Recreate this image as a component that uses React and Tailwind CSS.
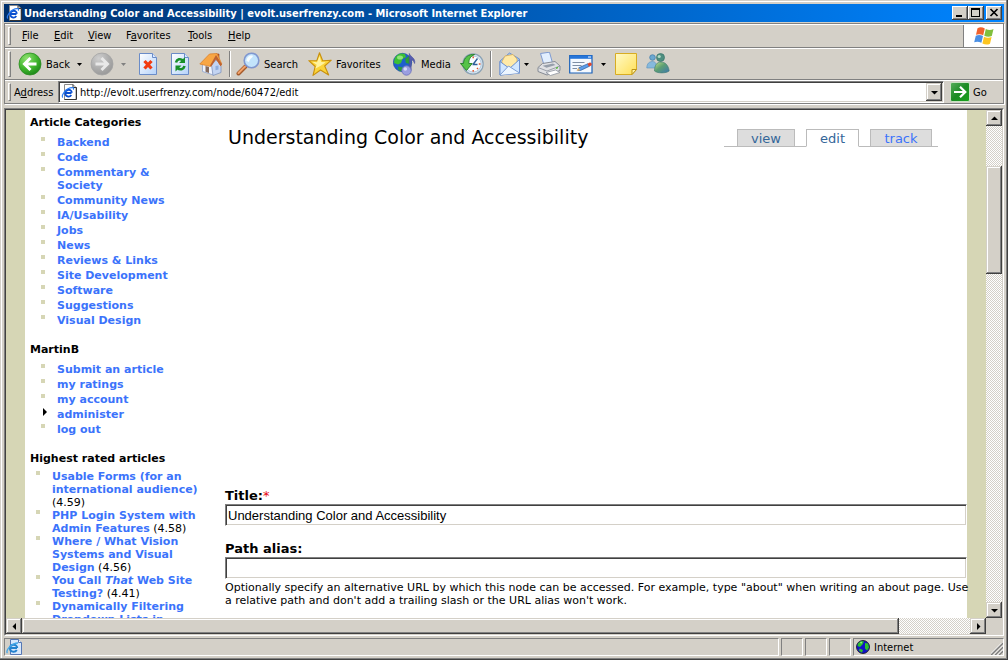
import React from "react";

const raised =
  "bg-[#d4d0c8] shadow-[inset_-1px_-1px_#404040,inset_1px_1px_#d4d0c8,inset_-2px_-2px_#808080,inset_2px_2px_#fff]";
const control =
  "bg-[#d4d0c8] shadow-[inset_-1px_-1px_#404040,inset_1px_1px_#fff,inset_-2px_-2px_#808080]";
const sunken = "border border-t-[#808080] border-l-[#808080] border-r-white border-b-white";
const inset =
  "border border-t-[#808080] border-l-[#808080] border-r-white border-b-white bg-white shadow-[inset_1px_1px_#404040,inset_-1px_-1px_#d4d0c8]";
const track =
  "bg-[repeating-conic-gradient(#ffffff_0_25%,#d4d0c8_0_50%)] bg-[length:2px_2px]";

function PageIcon({ className }) {
  return (
    <svg viewBox="0 0 16 16" className={className} aria-hidden="true">
      <path d="M3.500 .5h8.500l3 3v12H3.500z" fill="#fff" stroke="#8a8a8a" />
      <path d="M12 .5v3h3.500v12h-12" fill="none" stroke="#333" />
      <path d="M10.500 9H4.500M10.300 11c-2 2.800-6 1.500-6-1.800 0-4.300 6.200-4.800 6.500-.4" fill="none" stroke="#0a4fd0" strokeWidth="1.800" />
      <path d="M2 13.500C-.8 12.500 5 3.200 11.500 3.600c1.500.1 1.300 1.200.7 2.100" fill="none" stroke="#2b7cf0" strokeWidth="1.200" />
    </svg>
  );
}

function Arrow({ dir = "down", className = "" }) {
  const d = {
    down: "M1 3h7L4.500 6.500z",
    up: "M1 6h7L4.500 2.500z",
    left: "M6 1v7L2.500 4.500z",
    right: "M3 1v7l3.500-3.500z",
  }[dir];
  return (
    <svg viewBox="0 0 9 9" className={`h-[9px] w-[9px] ${className}`} aria-hidden="true">
      <path d={d} fill="currentColor" />
    </svg>
  );
}

function SmallArrow({ className = "" }) {
  return (
    <svg viewBox="0 0 5 3" className={`h-[3px] w-[5px] shrink-0 ${className}`} aria-hidden="true">
      <path d="M0 0h5L2.500 3z" fill="currentColor" />
    </svg>
  );
}

function NavIcon({ forward }) {
  const id = forward ? "navf" : "navb";
  return (
    <svg viewBox="0 0 24 24" className="h-6 w-6 shrink-0" aria-hidden="true">
      <defs>
        <radialGradient id={id} cx=".35" cy=".25" r=".8">
          <stop offset="0" stopColor={forward ? "#cfcfcf" : "#8fe070"} />
          <stop offset=".6" stopColor={forward ? "#ababab" : "#3fb52c"} />
          <stop offset="1" stopColor={forward ? "#989898" : "#1d861a"} />
        </radialGradient>
      </defs>
      <circle cx="12" cy="12" r="11" fill={`url(#${id})`} stroke={forward ? "#a5a5a5" : "#2c8c22"} strokeWidth=".8" />
      <path
        d={forward ? "M5.500 12H17.500M11.500 6l6 6-6 6" : "M18.500 12H6.500M12.500 6l-6 6 6 6"}
        fill="none"
        stroke={forward ? "#e8e8e8" : "#fff"}
        strokeWidth="3"
      />
    </svg>
  );
}

function SheetIcon({ kind }) {
  return (
    <svg viewBox="0 0 20 24" className="h-6 w-5 shrink-0" aria-hidden="true">
      <defs>
        <linearGradient id={`sheet-${kind}`} x1="0" y1="0" x2="1" y2="1">
          <stop offset="0" stopColor="#fff" />
          <stop offset="1" stopColor="#b4d2fa" />
        </linearGradient>
      </defs>
      <path d="M1.500 1.500h13l4 4V22.500h-17z" fill={`url(#sheet-${kind})`} stroke="#6a8cc8" />
      <path d="M14.500 1.500v4h4" fill="#dbe9ff" stroke="#6a8cc8" />
      {kind === "stop" ? (
        <path d="M6.500 9l7 7.500M13.500 9l-7 7.500" stroke="#f23a10" strokeWidth="3.200" />
      ) : (
        <g fill="none" stroke="#17902a" strokeWidth="2.600">
          <path d="M6 10.500c.8-3.500 4.500-4.200 7-2" />
          <path d="M14.500 14c-.8 3.500-4.500 4.200-7 2" />
          <path d="M15 5v6H9zM5.500 19.500v-6h6z" fill="#17902a" stroke="none" />
        </g>
      )}
    </svg>
  );
}

function HomeIcon() {
  return (
    <svg viewBox="0 0 24 24" className="h-6 w-6 shrink-0" aria-hidden="true">
      <path d="M3.500 12l9-4 2 5v10l-11-3.500z" fill="#eef3fd" stroke="#8da2cc" strokeWidth=".8" />
      <path d="M12.500 13l5-5.500 4.500 6.500v6.500l-8 3z" fill="#c3d4f2" stroke="#7f93bd" strokeWidth=".8" />
      <path d="M17 2h3v6h-3z" fill="#c7592b" stroke="#94401d" strokeWidth=".6" />
      <path d="M.8 12L10.500 2l7.500-.5L22.800 12l-1.300 1.500L17 6.500l-5.500 8z" fill="#f8a644" stroke="#d9822e" strokeWidth=".8" />
      <path d="M17 3l6 9.500-1.300 1.800L17 7l-4.800 7.500-1.200-1z" fill="#bd6233" />
      <path d="M6.500 14l3.500 1v6l-3.500-1.200z" fill="#866a5c" />
      <path d="M16.500 14l3-.6v4l-3 .9z" fill="#8eadde" />
    </svg>
  );
}

function SearchIcon() {
  return (
    <svg viewBox="0 0 24 24" className="h-6 w-6 shrink-0" aria-hidden="true">
      <path d="M2.500 21.500L9.500 14.500" stroke="#a55a2a" strokeWidth="4" strokeLinecap="round" />
      <path d="M2.500 21L9 14.500" stroke="#f1a26b" strokeWidth="2" strokeLinecap="round" />
      <circle cx="15.500" cy="8.500" r="7.300" fill="#c3e4fc" stroke="#8097cf" strokeWidth="1.600" />
      <path d="M10.500 9c0-4 3-6 6-5.500 1.500 2-2.500 2.200-3.500 6.500z" fill="#f6fcff" />
    </svg>
  );
}

function StarIcon() {
  return (
    <svg viewBox="0 0 24 24" className="h-6 w-6 shrink-0" aria-hidden="true">
      <path
        d="M11.500 .8l3.200 8 8.600-.6-6.600 5.800 4 9-8.200-5-7.500 5.400 2.200-8.900L.8 8.700l8 .1z"
        fill="#fbd43a"
        stroke="#c8900e"
        strokeWidth="1.100"
        strokeLinejoin="round"
      />
      <path d="M11.500 4l1.700 6 4.500.3-5 3.500-5.500 3 1.500-4-4.500-3 4.800.5z" fill="#fff3a0" />
    </svg>
  );
}

function MediaIcon() {
  return (
    <svg viewBox="0 0 24 24" className="h-6 w-6 shrink-0" aria-hidden="true">
      <circle cx="9.500" cy="10.500" r="9.200" fill="#1f5fcc" stroke="#164a9c" strokeWidth=".6" />
      <path d="M1.500 7C4 1.500 8 .8 12 2l1 3-3.500 2L8 11l-3 1.500L1 11z" fill="#3cc034" />
      <path d="M12 7l4-3 2 4-1 4-4-1zM5 14.500l5 1-1.500 4-3-1.500z" fill="#2b9f36" />
      <ellipse cx="7" cy="5.500" rx="3" ry="2" fill="#b4f39a" opacity=".7" />
      <path d="M16.300 18.500V1.500c1.200 3.500 6.500 4.500 5.300 10-.8-2.500-2-3.500-3.500-3.700v10.700z" fill="#565cae" stroke="#454b9a" strokeWidth=".6" />
      <circle cx="13.500" cy="18.500" r="4.700" fill="#9a9ee0" stroke="#686dbb" strokeWidth=".8" />
      <circle cx="12.300" cy="17" r="1.800" fill="#d5d7fb" />
    </svg>
  );
}

function HistoryIcon() {
  return (
    <svg viewBox="0 0 24 24" className="h-6 w-6 shrink-0" aria-hidden="true">
      <circle cx="13" cy="12" r="10.200" fill="#d7e5f2" stroke="#8ba2b5" strokeWidth="1.200" />
      <circle cx="13.200" cy="12" r="8" fill="#f8fcff" stroke="#a8c0d6" strokeWidth=".8" />
      <path d="M13 12.500l4.500-6M12.500 12.500h5" stroke="#2c5d9a" strokeWidth="1.400" />
      <path d="M13.200 4.500v1.700M20.500 12h-1.700M13.200 18v1.700M18 17l-1-1" stroke="#e0502a" strokeWidth="1.400" />
      <path d="M.5 11.500h3C3.800 5.500 8.500 2 14.500 2.500 10 4.500 8.800 7.500 8.800 11.500h3.400l-5.700 7z" fill="#55c348" stroke="#237f24" strokeWidth=".9" strokeLinejoin="round" />
    </svg>
  );
}

function MailIcon() {
  return (
    <svg viewBox="0 0 22 24" className="h-6 w-[22px] shrink-0" aria-hidden="true">
      <path d="M1 9L10.500 1 20.500 7v14L1 23z" fill="#9cc4f5" stroke="#6d91cf" />
      <path d="M3 9.500l3-5.500 8-1.500 4 4.500v6l-7 4-8-4z" fill="#ffe9a6" stroke="#dcae55" strokeWidth=".8" />
      <path d="M1 9.500l9.500 7L20.500 7.500V21L1 23z" fill="#d2e7ff" stroke="#6d91cf" />
      <path d="M1 23l8.500-9L20.500 21" fill="#edf6ff" stroke="#7b9dd5" />
    </svg>
  );
}

function PrintIcon() {
  return (
    <svg viewBox="0 0 24 24" className="h-6 w-6 shrink-0" aria-hidden="true">
      <path d="M3.500 1.500l9-1.300L15.500 11 7 13z" fill="#e2efff" stroke="#7f9bd1" />
      <path d="M1 15.500L5.500 11.500l12.500-2 5 4.500v4.500L10 23 1 19.500z" fill="#e0e1e4" stroke="#868b94" />
      <path d="M1 15.500l9 3.500 13-5" fill="none" stroke="#9a9fa8" />
      <path d="M5.500 13.700L16 11.500l2.500 1.500L9.500 15.700z" fill="#969eaa" />
      <path d="M9 20.500l9.500-2.500 4.500 2.500L13.500 23.500z" fill="#fff" stroke="#8d939e" strokeWidth=".8" />
      <path d="M19 15.500l2-.7v1.500l-2 .7z" fill="#57bc3c" />
    </svg>
  );
}

function EditIcon() {
  return (
    <svg viewBox="0 0 24 24" className="h-6 w-6 shrink-0" aria-hidden="true">
      <path d="M.7 3.500h22.300v17.500H.7z" fill="#f4f9ff" stroke="#1960b8" strokeWidth="1.200" />
      <path d="M1 3.500h22v3.300H1z" fill="#2675d9" />
      <path d="M19 5h3" stroke="#fff" />
      <path d="M3.500 10.500h12M3.500 13.500h9M3.500 16.500h4.500" stroke="#7f8fa5" />
      <path d="M9 18.500l.8-2.800 9.200-4 1.500 2.500-9 4.300z" fill="#5b9dea" stroke="#275a9e" strokeWidth=".7" />
      <path d="M18.500 11.800l2.300-1.300c2 0 2.500 2 1.500 3l-2.300 1z" fill="#dc452c" />
      <path d="M7.500 19l1.800-3.200 2 2.400z" fill="#e6b36d" />
    </svg>
  );
}

function NoteIcon() {
  return (
    <svg viewBox="0 0 22 24" className="h-6 w-[22px] shrink-0" aria-hidden="true">
      <defs>
        <linearGradient id="note" x1="0" y1="0" x2="1" y2="1">
          <stop offset="0" stopColor="#fffac8" />
          <stop offset="1" stopColor="#ffdf55" />
        </linearGradient>
      </defs>
      <path d="M.5 1.500h21v16l-4.500 5H.5z" fill="url(#note)" stroke="#d8ac22" />
      <path d="M17 22.500v-5h4.500z" fill="#fff3a2" stroke="#bd9313" />
    </svg>
  );
}

function PeopleIcon() {
  return (
    <svg viewBox="0 0 24 24" className="h-6 w-6 shrink-0" aria-hidden="true">
      <defs>
        <linearGradient id="body" x1="0" y1="0" x2="1" y2="1">
          <stop offset="0" stopColor="#c4e08c" />
          <stop offset=".45" stopColor="#5d9f72" />
          <stop offset="1" stopColor="#3d77b1" />
        </linearGradient>
      </defs>
      <circle cx="6.500" cy="5.500" r="2.800" fill="#6ba8d0" stroke="#3e78a8" strokeWidth=".7" />
      <path d="M.8 16c0-4.500 2.500-6.500 5.700-6.500s4.500 3 4.500 6.500z" fill="#86b9dc" stroke="#5a90bd" strokeWidth=".6" />
      <circle cx="14.500" cy="5.500" r="4" fill="#4e8e80" stroke="#397468" strokeWidth=".7" />
      <circle cx="13.200" cy="4.500" r="1.600" fill="#b4dcc4" />
      <path d="M8.500 19C8.500 13 11 10 15 10s7.500 3 8.200 9c-3 2.500-12 2.500-14.700 0z" fill="url(#body)" stroke="#3c786f" strokeWidth=".6" />
    </svg>
  );
}

function GoIcon() {
  return (
    <svg viewBox="0 0 20 20" className="h-5 w-5 shrink-0" aria-hidden="true">
      <defs>
        <linearGradient id="go" x1="0" y1="0" x2="1" y2="1">
          <stop offset="0" stopColor="#57ad5b" />
          <stop offset=".5" stopColor="#1c8b24" />
          <stop offset="1" stopColor="#17a41b" />
        </linearGradient>
      </defs>
      <rect x=".5" y=".5" width="19" height="19" rx="1.500" fill="url(#go)" stroke="#c8e2c2" />
      <path d="M4 10h11M10 4.800l5.300 5.200-5.300 5.200" fill="none" stroke="#fff" strokeWidth="2.200" />
    </svg>
  );
}

function FlagIcon() {
  return (
    <svg viewBox="0 0 20 20" className="h-5 w-5" aria-hidden="true">
      <path d="M3.500 2.200c2.500-1.500 5-1 7.300.3L9.200 9.300C7 8 4.500 7.700 2 8.800z" fill="#f0622d" />
      <path d="M11.800 3c2.500 1.200 5 1.300 7.700.1L17.800 10c-2.500 1.200-5 1-7.500-.2z" fill="#80bf3c" />
      <path d="M1.800 9.800c2.500-1.200 5-1 7.200.3l-1.600 6.700C5 15.500 2.500 15.200.2 16.300z" fill="#4a8fe4" />
      <path d="M10 10.800c2.500 1.200 5 1.300 7.600.2L16 17.700c-2.500 1.300-5 1-7.600-.2z" fill="#fcc522" />
    </svg>
  );
}

function StatusPageIcon() {
  return (
    <svg viewBox="0 0 16 16" className="h-4 w-4" aria-hidden="true">
      <path d="M4.500 .5h8l3 3v12h-11z" fill="#d8e8fc" stroke="#5577b4" />
      <path d="M12.500 .5v3h3" fill="#fff" stroke="#5577b4" />
      <path d="M11 9H4M10.800 11c-2 3-6.800 2-6.800-1.800C4 4.800 11 4.300 11.200 9" fill="none" stroke="#2382cf" strokeWidth="2" />
      <path d="M1.500 14C-1 12.500 5 4 12 4" fill="none" stroke="#42a6e8" strokeWidth="1.300" />
    </svg>
  );
}

function GlobeIcon() {
  return (
    <svg viewBox="0 0 14 14" className="h-[14px] w-[14px]" aria-hidden="true">
      <circle cx="7" cy="7" r="6.500" fill="#1212c8" stroke="#111" strokeWidth=".8" />
      <path d="M2 3.500L5 1l3 .5-1.500 3L4 7 1.500 6zM9 3l3 .5 1 4-2 3-2-2V6zM3.500 8.500L7 10l-1 2.800-3-2z" fill="#2cc22c" />
      <path d="M4 2.500l2-.8-.8 2z" fill="#b9ffb0" />
    </svg>
  );
}

function Grip({ className = "h-[18px]" }) {
  return <span className={`ml-[3px] w-[3px] shrink-0 border-y border-l border-r border-t-white border-l-white border-r-[#808080] border-b-[#808080] ${className}`} />;
}

function Separator() {
  return <span className="h-[26px] w-[2px] shrink-0 border-l border-r border-l-[#808080] border-r-white" />;
}

function ToolButton({ label, text, className = "", children }) {
  return (
    <button type="button" aria-label={label} className={`flex shrink-0 items-center gap-1 ${className}`}>
      {children}
      {text ? <span>{text}</span> : null}
    </button>
  );
}

const menus = [
  ["", "F", "ile", "w-8"],
  ["", "E", "dit", "w-[34px]"],
  ["", "V", "iew", "w-[38px]"],
  ["F", "a", "vorites", "w-[62px]"],
  ["", "T", "ools", "w-10"],
  ["", "H", "elp", "w-8"],
];

const categories = [
  "Backend",
  "Code",
  "Commentary & Society",
  "Community News",
  "IA/Usability",
  "Jobs",
  "News",
  "Reviews & Links",
  "Site Development",
  "Software",
  "Suggestions",
  "Visual Design",
];

const account = ["Submit an article", "my ratings", "my account", "administer", "log out"];

const rated = [
  [<>Usable Forms (for an international audience)</>, "4.59"],
  [<>PHP Login System with Admin Features</>, "4.58"],
  [<>Where / What Vision Systems and Visual Design</>, "4.56"],
  [<>You Call <em>That</em> Web Site Testing?</>, "4.41"],
  [<>Dynamically Filtering Dropdown Lists in</>, null],
];

function LinkList({ items }) {
  return (
    <ul className="mt-[7px] flex flex-col gap-[2px] pl-[11px]">
      {items.map((item) => (
        <li key={item} className="flex items-start">
          {item === "administer" ? (
            <svg viewBox="0 0 4 8" className="ml-[2px] mr-[10px] h-2 w-1 shrink-0" aria-hidden="true">
              <path d="M0 0l4 4-4 4z" fill="#000" />
            </svg>
          ) : (
            <span className="mr-3 mt-px h-1 w-1 shrink-0 bg-[#d6d6b5]" />
          )}
          <a href="#" className="w-[124px] font-bold text-[#3b73fb]">{item}</a>
        </li>
      ))}
    </ul>
  );
}

function Sidebar() {
  return (
    <nav className="w-[200px] shrink-0 pl-[5px] pt-[6px]">
      <h2 className="font-bold">Article Categories</h2>
      <LinkList items={categories} />
      <h2 className="mt-4 font-bold">MartinB</h2>
      <LinkList items={account} />
      <h2 className="mt-4 font-bold">Highest rated articles</h2>
      <ul className="mt-[5px] pl-[6px]">
        {rated.map(([title, score], i) => (
          <li key={i} className="flex items-start">
            <span className="mr-3 mt-px h-1 w-1 shrink-0 bg-[#d6d6b5]" />
            <span className="w-[160px]">
              <a href="#" className="font-bold text-[#3b73fb]">{title}</a>
              {score ? ` (${score})` : null}
            </span>
          </li>
        ))}
      </ul>
    </nav>
  );
}

function Tabs() {
  const base = "h-[18px] shrink-0 border border-[#bbb] text-center leading-[18px]";
  return (
    <div className="mt-[19px] flex h-[18px] text-[13px]">
      <span className="w-[13px] border-b border-[#bbb]" />
      <a href="#" className={`${base} w-[58px] bg-[#ddd] text-[#336699]`}>view</a>
      <span className="w-[11px] border-b border-[#bbb]" />
      <a href="#" className={`${base} w-[53px] border-b-white bg-white text-[#336699]`}>edit</a>
      <span className="w-[11px] border-b border-[#bbb]" />
      <a href="#" className={`${base} w-[62px] bg-[#ddd] text-[#3b73fb]`}>track</a>
      <span className="w-[6px] border-b border-[#bbb]" />
    </div>
  );
}

const field =
  `block h-[22px] w-full pl-[2px] font-['Liberation_Sans',sans-serif] text-[13px] outline-none ${inset}`;

export default function App() {
  return (
    <div className="flex h-screen w-full flex-col overflow-hidden bg-[#d4d0c8] p-1 font-['DejaVu_Sans_Condensed','DejaVu_Sans',sans-serif] text-[11px] leading-[13px] text-black shadow-[inset_-1px_-1px_#404040,inset_-2px_-2px_#808080,inset_1px_1px_#d4d0c8,inset_2px_2px_#fff]">
      <header className="flex h-[18px] shrink-0 items-center bg-linear-to-r/srgb from-[#00306c] to-[#0084ff] px-[2px]">
        <PageIcon className="h-4 w-4 shrink-0" />
        <h1 className="ml-[2px] min-w-0 flex-1 truncate font-bold text-white">
          Understanding Color and Accessibility | evolt.userfrenzy.com - Microsoft Internet Explorer
        </h1>
        <button type="button" aria-label="Minimize" className={`flex h-[14px] w-4 items-center justify-center ${control}`}>
          <svg viewBox="0 0 16 14" className="h-[14px] w-4"><path d="M4 9h6v2H4z" /></svg>
        </button>
        <button type="button" aria-label="Maximize" className={`flex h-[14px] w-4 items-center justify-center ${control}`}>
          <svg viewBox="0 0 16 14" className="h-[14px] w-4"><path d="M3 2h9v9H3zM4 4v6h7V4z" fillRule="evenodd" /></svg>
        </button>
        <button type="button" aria-label="Close" className={`ml-[2px] flex h-[14px] w-4 items-center justify-center ${control}`}>
          <svg viewBox="0 0 16 14" className="h-[14px] w-4"><path d="M4.500 3l7 7M11.500 3l-7 7" stroke="#000" strokeWidth="1.700" /></svg>
        </button>
      </header>

      <div className="mt-px shrink-0 border-x border-t border-[#808080] shadow-[1px_1px_#fff]">
        <div className="flex h-6 items-center border-t border-b border-t-white border-b-[#808080]">
          <Grip />
          <div className="ml-[5px] flex flex-1 pb-[2px]">
            {menus.map(([pre, key, post, width]) => (
              <button key={key + post} type="button" className={`${width} pl-[6px] text-left whitespace-nowrap`}>
                {pre}<u>{key}</u>{post}
              </button>
            ))}
          </div>
          <div className="flex h-[22px] w-10 items-center justify-center border-l border-[#808080] bg-white">
            <FlagIcon />
          </div>
        </div>

        <div className="flex h-8 items-center border-t border-b border-t-white border-b-[#808080]">
          <Grip className="h-[26px]" />
          <ToolButton label="Back" text="Back" className="ml-[7px] w-[57px]"><NavIcon /></ToolButton>
          <SmallArrow className="ml-[2px]" />
          <ToolButton label="Forward" className="ml-2"><NavIcon forward /></ToolButton>
          <SmallArrow className="ml-[7px] text-[#808080]" />
          <ToolButton label="Stop" className="ml-3"><SheetIcon kind="stop" /></ToolButton>
          <ToolButton label="Refresh" className="ml-3"><SheetIcon kind="refresh" /></ToolButton>
          <ToolButton label="Home" className="ml-[9px] mr-[6px]"><HomeIcon /></ToolButton>
          <Separator />
          <ToolButton label="Search" text="Search" className="ml-[5px] w-[72px]"><SearchIcon /></ToolButton>
          <ToolButton label="Favorites" text="Favorites" className="w-[85px]"><StarIcon /></ToolButton>
          <ToolButton label="Media" text="Media" className="w-[67px]"><MediaIcon /></ToolButton>
          <ToolButton label="History" className="mr-[6px]"><HistoryIcon /></ToolButton>
          <Separator />
          <ToolButton label="Mail" className="ml-[7px]"><MailIcon /></ToolButton>
          <SmallArrow className="ml-[3px]" />
          <ToolButton label="Print" className="ml-2"><PrintIcon /></ToolButton>
          <ToolButton label="Edit page" className="ml-2"><EditIcon /></ToolButton>
          <SmallArrow className="ml-2" />
          <ToolButton label="Discuss" className="ml-[9px]"><NoteIcon /></ToolButton>
          <ToolButton label="Messenger" className="ml-[9px]"><PeopleIcon /></ToolButton>
        </div>

        <div className="flex h-6 items-center border-t border-b border-t-white border-b-[#808080]">
          <Grip />
          <label htmlFor="address" className="ml-[3px] w-11 whitespace-nowrap">A<u>d</u>dress</label>
          <div className={`flex h-[22px] flex-1 items-center px-px ${inset}`}>
            <PageIcon className="ml-px h-4 w-4 shrink-0" />
            <input id="address" defaultValue="http://evolt.userfrenzy.com/node/60472/edit" className="ml-[3px] min-w-0 flex-1 bg-transparent outline-none" />
            <button type="button" aria-label="Address list" className={`flex h-[18px] w-4 items-center justify-center ${raised}`}>
              <Arrow />
            </button>
          </div>
          <button type="button" className="ml-[6px] flex w-[53px] items-center gap-[3px]">
            <GoIcon />
            <span>Go</span>
          </button>
        </div>
      </div>

      <main className="mt-1 flex min-h-0 flex-1 flex-col border border-t-[#808080] border-l-[#808080] border-r-white border-b-white">
        <div className="flex min-h-0 flex-1 flex-col border border-t-[#404040] border-l-[#404040] border-r-[#d4d0c8] border-b-[#d4d0c8]">
          <div className="flex min-h-0 flex-1">
            <div className="min-w-0 flex-1 overflow-hidden bg-[#d6d6b5] px-[19px] font-['DejaVu_Sans',sans-serif]">
              <div className="flex min-h-full bg-white">
                <Sidebar />
                <section className="min-w-0 flex-1">
                  <div className="flex items-start justify-between pl-[3px] pr-[29px]">
                    <h2 className="mt-4 whitespace-nowrap text-[19px] leading-[23px]">Understanding Color and Accessibility</h2>
                    <Tabs />
                  </div>
                  <form className="pt-[339px]">
                    <label htmlFor="title" className="block text-[13px] font-bold leading-[16px]">
                      Title:<span className="font-normal text-red-600">*</span>
                    </label>
                    <input id="title" defaultValue="Understanding Color and Accessibility" className={field} />
                    <label htmlFor="alias" className="mt-[15px] block text-[13px] font-bold leading-[16px]">Path alias:</label>
                    <input id="alias" className={field} />
                    <p className="mt-[2px] whitespace-nowrap">
                      Optionally specify an alternative URL by which this node can be accessed. For example, type "about" when writing an about page. Use
                      <br />
                      a relative path and don't add a trailing slash or the URL alias won't work.
                    </p>
                  </form>
                </section>
              </div>
            </div>
            <div className={`flex w-4 shrink-0 flex-col ${track}`}>
              <button type="button" aria-label="Scroll up" className={`flex h-4 items-center justify-center ${raised}`}><Arrow dir="up" /></button>
              <div className="grow-[40]" />
              <div className={`h-[108px] ${raised}`} />
              <div className="grow-[328]" />
              <button type="button" aria-label="Scroll down" className={`flex h-4 items-center justify-center ${raised}`}><Arrow /></button>
            </div>
          </div>
          <div className="flex h-4 shrink-0">
            <div className={`flex flex-1 ${track}`}>
              <button type="button" aria-label="Scroll left" className={`flex w-4 items-center justify-center ${raised}`}><Arrow dir="left" /></button>
              <div className={`grow-[877] ${raised}`} />
              <div className="grow-[71]" />
              <button type="button" aria-label="Scroll right" className={`flex w-4 items-center justify-center ${raised}`}><Arrow dir="right" /></button>
            </div>
            <div className="w-4" />
          </div>
        </div>
      </main>

      <footer className="mt-[2px] flex h-[18px] shrink-0 gap-[2px]">
        <div className={`flex flex-1 items-center pl-px ${sunken}`}><StatusPageIcon /></div>
        <div className={`w-[22px] ${sunken}`} />
        <div className={`w-[22px] ${sunken}`} />
        <div className={`w-[22px] ${sunken}`} />
        <div className={`flex w-[151px] items-center gap-1 pl-[2px] ${sunken}`}>
          <GlobeIcon />
          <span className="flex-1">Internet</span>
          <svg viewBox="0 0 12 12" className="h-3 w-3 self-end" aria-hidden="true">
            <path d="M0 12L12 0M4 12l8-8M8 12l4-4" stroke="#808080" strokeWidth="1.600" />
            <path d="M-1.500 12L12-1.500M2.500 12L12 2.500M6.500 12L12 6.500" stroke="#fff" strokeWidth=".9" />
          </svg>
        </div>
      </footer>
    </div>
  );
}
